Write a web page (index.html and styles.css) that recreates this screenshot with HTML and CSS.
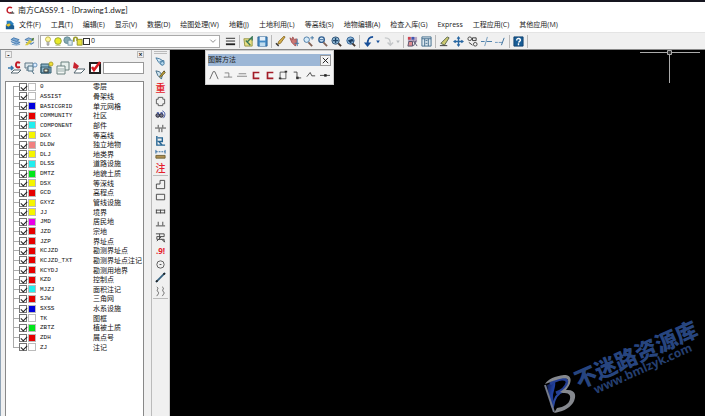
FILE: index.html
```html
<!DOCTYPE html>
<html lang="zh-CN">
<head>
<meta charset="utf-8">
<title>南方CASS9.1 - [Drawing1.dwg]</title>
<link rel="stylesheet" href="styles.css">
</head>
<body>
<header class="titlebar">
  <svg class="app-logo" viewBox="0 0 12 12"><path d="M8 2.500C5 .5 1.500 2 1.500 5.500S5 10 7.500 8.500" fill="none" stroke="#c01c28" stroke-width="2"/><path d="M6 9.500h5M8.500 7v3" stroke="#555" stroke-width="1.500"/></svg>
  <h1>南方CASS9.1 - [Drawing1.dwg]</h1>
</header>
<nav class="menubar" aria-label="菜单">
  <svg class="doc-logo" viewBox="0 0 12 12"><path d="M2 1h5l3 3v4H2z" fill="#2c82c0"/><path d="M1 6l3-2 7 3v4H1z" fill="#1b5e94"/><path d="M1 6l4-2 2 2-3 2z" fill="#e9c52c"/></svg>
  <button>文件(F)</button><button>工具(T)</button><button>编辑(E)</button><button>显示(V)</button><button>数据(D)</button><button>绘图处理(W)</button><button>地籍(J)</button><button>土地利用(L)</button><button>等高线(S)</button><button>地物编辑(A)</button><button>检查入库(G)</button><button>Express</button><button>工程应用(C)</button><button>其他应用(M)</button>
</nav>
<div class="toolbar" role="toolbar" aria-label="标准">
  <button class="tool" aria-label="图层"><svg viewBox="0 0 12 12"><path d="M1 4l3-2 6 2-3 2zM1 6l6 3 4-2-3-1" fill="#7da7d3" stroke="#4177ad"/><path d="M2 9l5 1 4-1" fill="none" stroke="#6f9cc7"/></svg></button>
  <button class="tool" aria-label="图层状态"><svg viewBox="0 0 12 12"><path d="M1 4l4-2 5 2-3 2zM2 7l6 2 3-2" fill="#8db0d6" stroke="#4c7bab"/><path d="M1 10l5-6 3 2-5 4z" fill="#d9c83c"/><path d="M8 3l3-1-1 4" fill="#46752c"/></svg></button>
  <span class="divider"></span>
  <div class="layer-combo">
    <svg viewBox="0 0 12 12"><circle cx="6" cy="4" r="3" fill="#fff79b" stroke="#b6ac3c"/><path d="M5 7v4h2V7" fill="#ddd" stroke="#888"/></svg>
    <svg viewBox="0 0 12 12"><circle cx="6" cy="6" r="4" fill="#e8ea28" stroke="#8a9a2c"/><path d="M3 11h6" stroke="#97a13c"/></svg>
    <svg viewBox="0 0 12 12"><circle cx="5" cy="5" r="4" fill="#85a9b1" stroke="#5d8490"/><rect x="6" y="5" width="5" height="6" fill="#dce8ee" stroke="#6991a5"/></svg>
    <svg viewBox="0 0 12 12"><path d="M1 7V3c0-2 4-2 4 0v3" fill="none" stroke="#9a9a28" stroke-width="2"/><path d="M5 4h6v7H5z" fill="#e5df3c" stroke="#888c25"/></svg>
    <span class="current-colour"></span>
    <select aria-label="当前图层"><option>0</option></select>
    <svg class="caret" viewBox="0 0 12 12"><path d="M2 4l4 4 4-4" fill="none" stroke="#555"/></svg>
  </div>
  <button class="tool" aria-label="线宽"><svg viewBox="0 0 12 12"><path d="M1 2.500h10M1 5.500h10" stroke="#222"/><path d="M1 9h10" stroke="#222" stroke-width="2"/></svg></button>
  <span class="divider"></span>
  <button class="tool" aria-label="打开"><svg viewBox="0 0 12 12"><path d="M1 3h9v8H2z" fill="#e9df84" stroke="#929443"/><path d="M4 7l6-6v4M3 5l5 5" fill="none" stroke="#3b7958" stroke-width="1.500"/></svg></button>
  <button class="tool" aria-label="保存"><svg viewBox="0 0 12 12"><path d="M1 1h10v10H1z" fill="#458bc5" stroke="#2f6597"/><path d="M3 1h6v4H3z" fill="#e5f0fa"/><path d="M3 7h6v4H3z" fill="#c1dcee"/></svg></button>
  <span class="divider"></span>
  <button class="tool" aria-label="画笔"><svg viewBox="0 0 12 12"><path d="M3 9l1-3 6-6 1 1-5 7z" fill="#d9b34b" stroke="#8a6b2b"/><path d="M1 8l3 3" stroke="#333" stroke-width="1.500"/></svg></button>
  <button class="tool" aria-label="平移"><svg viewBox="0 0 12 12"><path d="M1 2l3 2V1l2 3 2-1v5l-1 3-4-4z" fill="#cc7774" stroke="#a25050"/><path d="M9 3v8M6 8h5" stroke="#4477a4"/></svg></button>
  <button class="tool" aria-label="实时缩放"><svg viewBox="0 0 12 12"><circle cx="4" cy="4" r="3" fill="#d6ebf9" stroke="#4677a3"/><path d="M6 7l4 4" stroke="#805f50" stroke-width="2"/><path d="M8 2h4M10 0v4" stroke="#4477a4"/></svg></button>
  <button class="tool" aria-label="窗口缩放"><svg viewBox="0 0 12 12"><circle cx="5" cy="4" r="3" fill="#d6ebf9" stroke="#315f91" stroke-width="1.500"/><path d="M7 7l4 4" stroke="#826458" stroke-width="2"/><path d="M3 4h4" stroke="#315f91"/></svg></button>
  <button class="tool" aria-label="全图"><svg viewBox="0 0 12 12"><circle cx="5" cy="5" r="4" fill="#94bdd9" stroke="#2c4f73"/><path d="M8 8l3 3" stroke="#44372f" stroke-width="2"/><path d="M2 5h6M5 2v6" stroke="#20466a" stroke-width="1.500"/></svg></button>
  <button class="tool" aria-label="上次视图"><svg viewBox="0 0 12 12"><circle cx="6" cy="5" r="4" fill="#8bb7da" stroke="#356394"/><path d="M8 8l3 3" stroke="#44372f" stroke-width="2"/><path d="M8 3L3 5l4 4V6h3" fill="#183c63"/></svg></button>
  <span class="divider"></span>
  <button class="tool" aria-label="撤销"><svg viewBox="0 0 12 12"><path d="M11 1C6 1 5 4 5 9" fill="none" stroke="#174f99" stroke-width="2"/><path d="M1 7h8l-4 5z" fill="#174f99"/></svg></button>
  <button class="tool drop" aria-label="撤销列表"><svg viewBox="0 0 6 12"><path d="M1 5h4L3 8z" fill="#174f99"/></svg></button>
  <button class="tool" aria-label="重做"><svg viewBox="0 0 12 12"><path d="M2 2c5 0 6 2 6 7M5 7l3 3 3-3" fill="none" stroke="#c4c7c9" stroke-width="1.500"/></svg></button>
  <button class="tool drop" aria-label="重做列表"><svg viewBox="0 0 6 12"><path d="M1 5h4L3 8z" fill="#b9bdc0"/></svg></button>
  <span class="divider"></span>
  <button class="tool" aria-label="特性匹配"><svg viewBox="0 0 12 12"><path d="M1 1h10v6H1z" fill="#b9a8c4"/><path d="M1 1h3v3H1z" fill="#d04450"/><path d="M5 1h3v3H5z" fill="#4056b0"/><path d="M2 6h4v5H1zM7 5l4 6M10 5l-3 6" fill="#df8d91" stroke="#545069"/></svg></button>
  <button class="tool" aria-label="特性"><svg viewBox="0 0 12 12"><path d="M1 1h10v10H1z" fill="#dce8ef" stroke="#426b8b"/><path d="M1 3h10M4 3v8M8 3v8M5 5h2M5 8h2" stroke="#426b8b"/></svg></button>
  <span class="divider"></span>
  <button class="tool" aria-label="删除"><svg viewBox="0 0 12 12"><path d="M2 8l7-7 2 1-5 8z" fill="#ceca70" stroke="#59664b"/><path d="M1 10.500h8" stroke="#333"/></svg></button>
  <button class="tool" aria-label="移动"><svg viewBox="0 0 12 12"><path d="M1 6h10M6 1v10" stroke="#2867a2" stroke-width="1.500"/><path d="M6 0L4 3h4zM6 12L4 9h4zM0 6l3-2v4zM12 6L9 4v4z" fill="#2867a2"/></svg></button>
  <button class="tool" aria-label="复制"><svg viewBox="0 0 12 12"><circle cx="3" cy="3" r="2" fill="none" stroke="#444"/><circle cx="9" cy="9" r="2" fill="none" stroke="#444"/><path d="M6 2h4v3H6zM2 7l4 3" fill="none" stroke="#333"/></svg></button>
  <button class="tool" aria-label="修剪"><svg viewBox="0 0 12 12"><path d="M0 6h4M6 6h6" stroke="#4177a4"/><path d="M4 11l3-10" stroke="#6c96b9"/></svg></button>
  <button class="tool" aria-label="延伸"><svg viewBox="0 0 12 12"><path d="M0 7h3M4 7h4" stroke="#6994ba"/><path d="M7 10l3-8" stroke="#336a98"/></svg></button>
  <span class="divider"></span>
  <button class="tool" aria-label="帮助"><svg viewBox="0 0 12 12"><path d="M1 1h10v10H1z" fill="#185d96" stroke="#104270"/><path d="M4 5c0-4 5-2 4 0L6 7M6 8v2" fill="none" stroke="#fff" stroke-width="1.500"/></svg></button>
  <span class="divider"></span>
</div>
<main class="workspace">
  <aside class="layers">
    <div class="layers-head"><button aria-label="折叠">-</button><button aria-label="关闭">×</button></div>
    <div class="layers-tools">
      <button aria-label="设为当前"><svg viewBox="0 0 14 14"><path d="M0 7h5M3 5l2 2-2 2" fill="none" stroke="#3578ad" stroke-width="1.500"/><path d="M3 12l3-3h7l-3 3z" fill="#fff" stroke="#52656e"/><path d="M12 2C9 0 8 2 8 4s1 3 4 2" fill="none" stroke="#c21824" stroke-width="2"/></svg></button>
      <button aria-label="查询图层"><svg viewBox="0 0 14 14"><path d="M1 2h8v5H1zM2 9h3" fill="#dde6ea" stroke="#5f7785"/><path d="M4 5h5v5H4zM8 10l2 3" fill="#ddebf2" stroke="#4d6f82"/><circle cx="11" cy="4" r="2" fill="#dcecff" stroke="#6994ba"/></svg></button>
      <button aria-label="打开图层"><svg viewBox="0 0 14 14"><path d="M1 3h8v9H1zM1 6h10v6H1z" fill="#8eb5ca" stroke="#315a6c"/><path d="M4 8h4v3H4z" fill="#e6eed8" stroke="#333"/><circle cx="11" cy="3" r="2" fill="#f0df35" stroke="#b4a630"/></svg></button>
      <button aria-label="图层列表"><svg viewBox="0 0 14 14"><path d="M5 1h8v8H5z" fill="#e7efec" stroke="#6b817e"/><path d="M1 5h8v8H1z" fill="#f2f6f4" stroke="#6b817e"/><path d="M2 8h6M2 10h6" stroke="#9badab"/></svg></button>
      <button aria-label="删除图层"><svg viewBox="0 0 14 14"><path d="M2 12l3-4h8l-4 4z" fill="#fff" stroke="#52656e"/><path d="M2 1l5 4-2 3-4-1z" fill="#c8222e"/></svg></button>
      <button aria-label="全选"><svg viewBox="0 0 14 14"><path d="M2 2h10v10H2z" fill="#fff" stroke="#222" stroke-width="2"/><path d="M4 6l2 3 6-8" fill="none" stroke="#d91c22" stroke-width="2.500"/></svg></button>
      <input type="text" aria-label="图层过滤">
    </div>
    <div class="tree">
      <ul>
        <li><label><input type="checkbox" checked><i></i><b>0</b>零层</label></li>
        <li><label><input type="checkbox" checked><i></i><b>ASSIST</b>骨架线</label></li>
        <li><label><input type="checkbox" checked><i class="blue"></i><b>BASICGRID</b>单元网格</label></li>
        <li><label><input type="checkbox" checked><i class="red"></i><b>COMMUNITY</b>社区</label></li>
        <li><label><input type="checkbox" checked><i class="cyan"></i><b>COMPONENT</b>部件</label></li>
        <li><label><input type="checkbox" checked><i class="yellow"></i><b>DGX</b>等高线</label></li>
        <li><label><input type="checkbox" checked><i class="pink"></i><b>DLDW</b>独立地物</label></li>
        <li><label><input type="checkbox" checked><i class="yellow"></i><b>DLJ</b>地类界</label></li>
        <li><label><input type="checkbox" checked><i class="cyan"></i><b>DLSS</b>道路设施</label></li>
        <li><label><input type="checkbox" checked><i class="green"></i><b>DMTZ</b>地貌土质</label></li>
        <li><label><input type="checkbox" checked><i class="yellow"></i><b>DSX</b>等深线</label></li>
        <li><label><input type="checkbox" checked><i class="red"></i><b>GCD</b>高程点</label></li>
        <li><label><input type="checkbox" checked><i class="yellow"></i><b>GXYZ</b>管线设施</label></li>
        <li><label><input type="checkbox" checked><i class="yellow"></i><b>JJ</b>境界</label></li>
        <li><label><input type="checkbox" checked><i class="magenta"></i><b>JMD</b>居民地</label></li>
        <li><label><input type="checkbox" checked><i class="red"></i><b>JZD</b>宗地</label></li>
        <li><label><input type="checkbox" checked><i class="red"></i><b>JZP</b>界址点</label></li>
        <li><label><input type="checkbox" checked><i class="red"></i><b>KCJZD</b>勘测界址点</label></li>
        <li><label><input type="checkbox" checked><i class="red"></i><b>KCJZD_TXT</b>勘测界址点注记</label></li>
        <li><label><input type="checkbox" checked><i class="red"></i><b>KCYDJ</b>勘测用地界</label></li>
        <li><label><input type="checkbox" checked><i class="red"></i><b>KZD</b>控制点</label></li>
        <li><label><input type="checkbox" checked><i class="cyan"></i><b>MJZJ</b>面积注记</label></li>
        <li><label><input type="checkbox" checked><i class="red"></i><b>SJW</b>三角网</label></li>
        <li><label><input type="checkbox" checked><i class="blue"></i><b>SXSS</b>水系设施</label></li>
        <li><label><input type="checkbox" checked><i></i><b>TK</b>图框</label></li>
        <li><label><input type="checkbox" checked><i class="green"></i><b>ZBTZ</b>植被土质</label></li>
        <li><label><input type="checkbox" checked><i class="red"></i><b>ZDH</b>展点号</label></li>
        <li><label><input type="checkbox" checked><i></i><b>ZJ</b>注记</label></li>
      </ul>
    </div>
  </aside>
  <div class="strip" role="toolbar" aria-label="实用工具栏">
    <div class="grip"></div>
    <div class="strip-group">
      <button aria-label="查看实体"><svg viewBox="0 0 12 12"><path d="M1 2l4 1 5 3-2 4-4-3zM5 6l5-1" fill="#d4e8f5" stroke="#3f779f"/><circle cx="8" cy="8" r="2" fill="#b6d8ec" stroke="#3f779f"/></svg></button>
      <button aria-label="加入编码"><svg viewBox="0 0 12 12"><path d="M1 2l4 1 3 4-1 4-4-4z" fill="#cee3ee" stroke="#3f6a85"/><path d="M5 8l5-6 1 2-5 5z" fill="#d6b136" stroke="#554a23"/></svg></button>
      <button class="glyph">重</button>
      <button aria-label="批量选目标"><svg viewBox="0 0 12 12"><path d="M3.500 3.500v-2h5v2M3.500 8.500v2h5v-2M3.500 3.500h-2v5h2M8.500 3.500h2v5h-2" fill="none" stroke="#555"/></svg></button>
      <button aria-label="查找"><svg viewBox="0 0 12 12"><circle cx="3" cy="7" r="2" fill="#778" stroke="#223"/><circle cx="7" cy="7" r="2" fill="#778" stroke="#223"/><path d="M2 4h2v2M6 4h2v2M8 2c3 1 4 5 1 8" fill="none" stroke="#334aa0"/></svg></button>
      <button aria-label="坎毛"><svg viewBox="0 0 12 12"><path d="M0 5.500h12M3.500 2v3M8.500 2v3M4.500 6v4M7.500 6v4" stroke="#444"/></svg></button>
      <button aria-label="坐标"><svg viewBox="0 0 12 12"><path d="M2 0v10h9M3 2h5v4H4l4 4" fill="none" stroke="#246493" stroke-width="1.500"/></svg></button>
      <button aria-label="距离"><svg viewBox="0 0 12 12"><path d="M1 1v4M11 1v4" stroke="#27659b"/><path d="M1 3h10" stroke="#27659b" stroke-dasharray="2 1"/><path d="M1 7h10v3H1z" fill="#b29151" stroke="#6e6238"/></svg></button>
      <button class="glyph">注</button>
    </div>
    <div class="strip-group">
      <button aria-label="多点房屋"><svg viewBox="0 0 12 12"><path d="M1.500 10.500v-5h4v-4h5v9z" fill="none" stroke="#444"/></svg></button>
      <button aria-label="四点房屋"><svg viewBox="0 0 12 12"><path d="M1.500 2.500h9v6h-9z" fill="none" stroke="#444"/></svg></button>
      <button aria-label="依比例围墙"><svg viewBox="0 0 12 12"><path d="M1 4.500h10M1 7.500h10M1.500 4v4M6 4v4M10.500 4v4" stroke="#444"/></svg></button>
      <button aria-label="陡坎"><svg viewBox="0 0 12 12"><path d="M1 7.500h10M3.500 3v4M8.500 3v4" stroke="#444"/></svg></button>
      <button aria-label="斜坡"><svg viewBox="0 0 12 12"><path d="M1 2h9v3H2v3h8v3M5 2v6M2 10l5-5M7 8l4 3" fill="none" stroke="#444"/></svg></button>
      <button class="glyph small">.9!</button>
      <button aria-label="图根点"><svg viewBox="0 0 12 12"><circle cx="6" cy="6" r="4" fill="none" stroke="#555"/><path d="M5 6h2" stroke="#444"/></svg></button>
      <button aria-label="电力线"><svg viewBox="0 0 12 12"><path d="M1 11L11 1" stroke="#35617f" stroke-width="2"/><path d="M1 9h2v2H1zM9 1h2v2H9z" fill="#222"/></svg></button>
      <button aria-label="道路"><svg viewBox="0 0 12 12"><path d="M2 1c3 2-1 3 1 5s0 3-1 5M8 1c3 2-1 3 1 5s0 3-1 5" fill="none" stroke="#555"/></svg></button>
    </div>
  </div>
  <section class="canvas" aria-label="绘图区">
    <div class="palette">
      <div class="palette-title"><h2>图解方法</h2><button aria-label="关闭"><svg viewBox="0 0 10 10"><path d="M2 2l6 6M8 2L2 8" stroke="#111"/></svg></button></div>
      <div class="palette-tools">
        <button aria-label="前方交会"><svg viewBox="0 0 12 12"><path d="M1 11l4-9h2l4 9" fill="none" stroke="#555"/></svg></button>
        <button aria-label="直角"><svg viewBox="0 0 12 12"><path d="M2 3.500h5v5M1 8.500h10" fill="none" stroke="#777"/></svg></button>
        <button aria-label="平行"><svg viewBox="0 0 12 12"><path d="M2 4.500h9M0 7.500h12" stroke="#777"/></svg></button>
        <button aria-label="左折"><svg viewBox="0 0 12 12"><path d="M10 3H3v7h7" fill="none" stroke="#a31d28" stroke-width="2"/></svg></button>
        <button aria-label="右折"><svg viewBox="0 0 12 12"><path d="M10 3H3v7h7" fill="none" stroke="#a31d28" stroke-width="2"/></svg></button>
        <button aria-label="矩形"><svg viewBox="0 0 12 12"><path d="M2.500 2.500h7v8h-7z" fill="none" stroke="#444"/><path d="M1 9h3v2H1zM8 1h3v2H8z" fill="#333"/></svg></button>
        <button aria-label="折线"><svg viewBox="0 0 12 12"><path d="M2 2.500h4v7h5" fill="none" stroke="#333"/><path d="M5 8h3v3H5z" fill="#333"/></svg></button>
        <button aria-label="多段"><svg viewBox="0 0 12 12"><path d="M1 8l4-5 2 4h4" fill="none" stroke="#333"/></svg></button>
        <button aria-label="延长"><svg viewBox="0 0 12 12"><path d="M0 6.500h12" stroke="#333"/><path d="M5 5h3v3H5z" fill="#222"/></svg></button>
      </div>
    </div>
    <svg class="cursor" viewBox="0 0 60 34"><path d="M0 3.500h60M29.500 3v31" stroke="#aaa"/><path d="M27.500 1.500h4v4h-4z" fill="#333" stroke="#aaa"/></svg>
    <svg class="watermark" viewBox="0 0 175 106">
      <defs><linearGradient id="blue" x1="0" y1="0" x2="1" y2="1"><stop offset="0" stop-color="#101a4a"/><stop offset=".5" stop-color="#2141a0"/><stop offset="1" stop-color="#16296c"/></linearGradient></defs>
      <path d="M17 75l8-3c1 3-1 8-2 13l1 15-3-3z" fill="url(#blue)"/>
      <path d="M20 74c8-6 18-7 17-1-1 5-6 8-11 10" fill="none" stroke="#243f94" stroke-width="3"/>
      <path d="M23 97c1-9 4-14 11-16" fill="none" stroke="#2a489f" stroke-width="2"/>
      <path d="M15 74c3-5 10-8 19-9 9 0 8 8 2 15 10-1 11 6 7 13-4 6-12 9-19 10l3-5c7-1 12-4 13-9 1-5-2-6-7-6l-3-1c6-4 9-8 8-12-1-4-11-1-23 4z" fill="#85888e"/>
      <path d="M15 75l9 27" fill="none" stroke="#747b8c" stroke-width="2"/>
      <text class="mark-name" transform="translate(49 79) rotate(-24)">不迷路资源库</text>
      <text class="mark-url" transform="translate(66 84) rotate(-24)">www.bmlzyk.com</text>
    </svg>
  </section>
</main>
</body>
</html>
```
FILE: styles.css
```css
* { box-sizing: border-box; }
body {
  margin: 0;
  height: 100vh;
  display: flex;
  flex-direction: column;
  overflow: hidden;
  border-top: 2px solid #15151f;
  background: #f0f0f0;
  color: #222;
  font: 7px/10px "Open Sans", "Noto Sans CJK SC", sans-serif;
}
button {
  display: grid;
  place-items: center;
  margin: 0;
  padding: 0;
  border: 0;
  background: none;
  color: inherit;
  font: inherit;
}
svg { display: block; }

.titlebar { display: flex; align-items: center; gap: 3px; height: 16px; padding-left: 6px; background: #fff; }
.titlebar h1 { margin: 0; font: 400 8px/10px Lato, "Noto Sans CJK SC", sans-serif; }
.app-logo { width: 9px; height: 9px; }
.menubar { display: flex; align-items: center; gap: 10px; height: 14px; padding-left: 5px; background: #fff; white-space: nowrap; }
.doc-logo { width: 10px; height: 10px; margin-right: -6px; }

.toolbar { display: flex; align-items: center; height: 18px; padding-left: 8px; border-top: 1px solid #e4e4e4; border-bottom: 1px solid #888; }
.tool { flex: none; width: 14px; height: 14px; }
.tool svg { width: 11px; height: 11px; }
.drop { width: 6px; }
.drop svg { width: 6px; }
.divider { flex: none; width: 1px; height: 13px; margin: 0 1px 0 2px; background: #b9b9b9; }
.layer-combo { display: flex; align-items: center; width: 180px; height: 13px; margin-right: 3px; padding: 0 2px; border: 1px solid #aaa; background: #fff; }
.layer-combo svg { flex: none; width: 10px; height: 10px; }
.layer-combo .caret { width: 8px; }
.current-colour { width: 7px; height: 7px; border: 1px solid #333; }
.layer-combo select { flex: 1; min-width: 0; height: 10px; padding: 0 1px; border: 0; appearance: none; background: none; color: #222; font: inherit; }

.workspace { flex: 1; display: flex; min-height: 0; }
.layers { display: flex; flex-direction: column; width: 152px; padding-left: 4px; padding-right: 7px; border-left: 1px solid #8fa3b5; border-right: 1px solid #bbb; }
.layers-head { display: flex; justify-content: space-between; align-items: center; height: 9px; }
.layers-head button { width: 7px; height: 7px; border: 1px solid #bbb; font-weight: 700; line-height: 5px; }
.layers-tools { display: flex; align-items: center; height: 17px; padding-left: 2px; }
.layers-tools button { width: 16px; height: 16px; }
.layers-tools svg { width: 14px; height: 14px; }
.layers-tools input { flex: 1; min-width: 0; height: 12px; padding: 0 2px; border: 1px solid #999; background: #fff; font: inherit; }
.tree { flex: 1; margin-top: 5px; border: 1px solid #888; border-bottom: 0; background: #fff; color: #111; font-family: "Noto Sans CJK SC", sans-serif; }
.tree ul { display: grid; grid-template-rows: repeat(28, 1fr); height: 270px; margin: 0 0 0 7px; padding: 0; list-style: none; background: linear-gradient(#aaa, #aaa) 0 4px / 1px 261px no-repeat; }
.tree li { display: flex; align-items: center; min-height: 0; white-space: nowrap; }
.tree li::before { content: ""; width: 6px; height: 1px; background: #aaa; }
.tree label { display: flex; align-items: center; height: 9px; line-height: 9px; }
.tree input { width: 8px; height: 8px; margin: 0 1px 0 0; appearance: none; border: 1px solid #777; background: #fff; }
.tree input:checked::before { content: ""; display: block; width: 5px; height: 3px; margin: 1px 0 0 1px; border: solid #222; border-width: 0 0 1px 1px; transform: rotate(-45deg); }
.tree i { width: 8px; height: 8px; border: 1px solid #bbb; background: #fff; }
.tree b { width: 53px; margin-left: 4px; font: 6px/9px "Liberation Mono", monospace; }
.tree .blue { background: #00d; }
.tree .red { background: #e60000; }
.tree .cyan { background: #2ee; }
.tree .yellow { background: #f5f500; }
.tree .pink { background: #f08080; }
.tree .green { background: #00e61a; }
.tree .magenta { background: #e800e8; }

.strip { width: 18px; padding: 1px 1px 0; border-right: 1px solid #ccc; }
.grip { height: 3px; margin: 0 1px 1px; border: solid #bbb; border-width: 1px 0; }
.strip-group { display: grid; grid-template-rows: repeat(9, 1fr); justify-items: center; height: 121px; margin-bottom: 2px; border-bottom: 1px solid #bbb; }
.strip-group svg { width: 11px; height: 11px; }
.strip-group button { min-height: 0; }
.glyph { color: #e5202a; font-size: 10px; font-weight: 500; line-height: 12px; }
.glyph.small { font-size: 8px; font-weight: 700; }

.canvas { position: relative; flex: 1; overflow: hidden; background: #000; }
.palette { position: absolute; left: 35px; top: 0; width: 129px; padding: 3px 2px 1px; border: 1px solid #ccc; background: #f4f4f4; }
.palette-title { display: flex; align-items: center; justify-content: space-between; height: 12px; background: #9db7d6; }
.palette-title h2 { margin: 0; font-size: 7px; font-weight: 400; }
.palette-title button { width: 11px; height: 11px; background: #f4f4f4; border: 1px solid #999; }
.palette-title button svg { width: 9px; height: 9px; }
.palette-tools { display: flex; justify-content: space-between; height: 17px; }
.palette-tools button { width: 12px; }
.palette-tools svg { width: 10px; height: 10px; }
.cursor { position: absolute; right: 5px; top: -1px; width: 60px; height: 34px; }
.watermark { position: absolute; right: 0; bottom: 0; width: 175px; height: 106px; }
.mark-name { fill: #27457f; font: 900 22px "Noto Sans CJK SC", sans-serif; }
.mark-url { fill: #253f70; font: 700 12px "Open Sans", sans-serif; }
```
